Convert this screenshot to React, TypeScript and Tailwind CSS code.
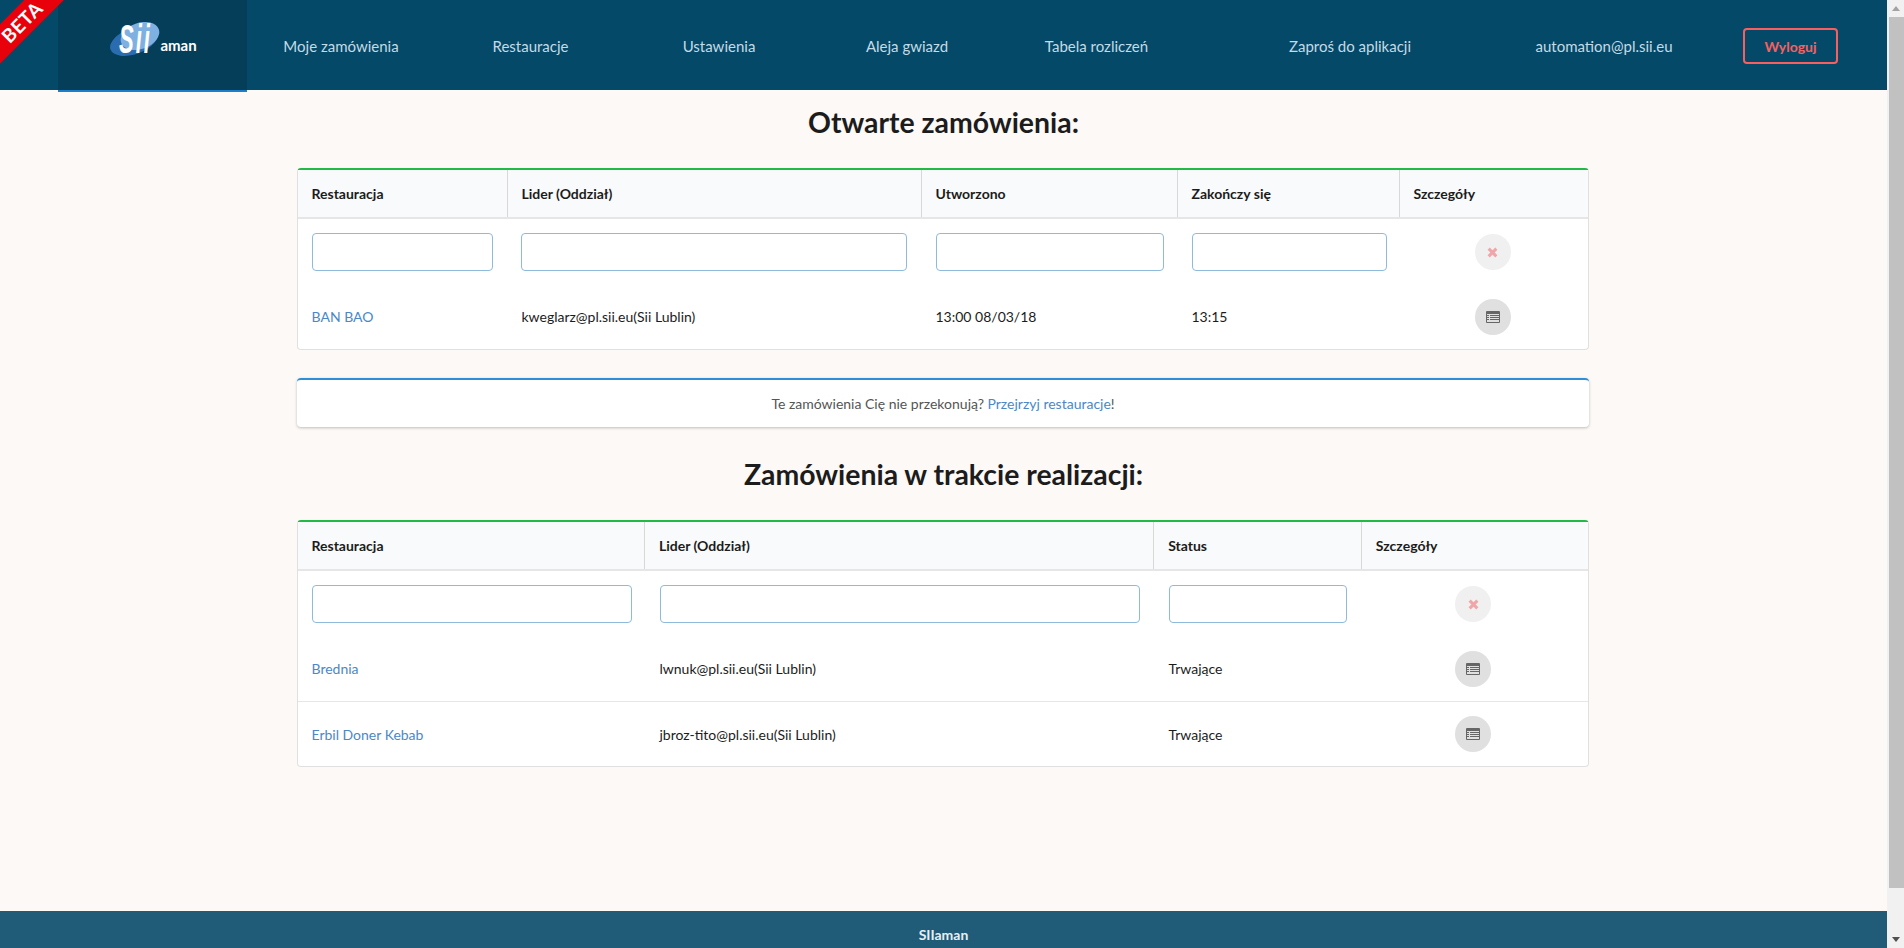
const navItems = [
  { label: "Moje zamówienia", w: "w-[188px]" },
  { label: "Restauracje", w: "w-[191px]" },
  { label: "Ustawienia", w: "w-[186px]" },
  { label: "Aleja gwiazd", w: "w-[190px]" },
  { label: "Tabela rozliczeń", w: "w-[189px]" },
  { label: "Zaproś do aplikacji", w: "w-[318px]" },
  { label: "automation@pl.sii.eu", w: "w-[190px]" },
];

function ClearButton() {
  return (
    <button className="w-9 h-9 rounded-full bg-[#f0f0f0] flex items-center justify-center mx-auto">
      <svg width="11" height="11" viewBox="0 0 10 10">
        <path d="M1.5 1.5 8.5 8.5M8.5 1.5 1.5 8.5" stroke="#f0a6a8" strokeWidth="2.8" />
      </svg>
    </button>
  );
}

function DetailsButton() {
  return (
    <button className="w-9 h-9 rounded-full bg-[#e0e0e0] flex items-center justify-center mx-auto">
      <svg width="14" height="12" viewBox="0 0 14 12">
        <rect x="0" y="0" width="14" height="12" rx="1" fill="#666" />
        <rect x="1" y="3" width="12" height="8" fill="#e0e0e0" />
        <path d="M1 4.5h2M4 4.5h9M1 6.5h2M4 6.5h9M1 8.5h2M4 8.5h9" stroke="#666" strokeWidth="1" />
      </svg>
    </button>
  );
}

function Filter({ cls }: { cls: string }) {
  return <input className={`block h-[38px] bg-white border border-[#8ebbdc] rounded-[4px] ${cls}`} />;
}

function HeadCell({ label, w, last }: { label: string; w: string; last?: boolean }) {
  return (
    <div className={`${w} px-[14px] flex items-center font-bold text-[14px] text-[#1c1c1c] ${last ? "" : "border-r border-[#d8d8d8]"}`}>
      {label}
    </div>
  );
}

function Card({ children }: { children: React.ReactNode }) {
  return (
    <div className="w-[1292px] mr-[2px] bg-white border border-[#e0e0e0] border-t-2 border-t-[#21ba45] rounded-[4px] text-[14px] text-[#1c1c1c]">
      {children}
    </div>
  );
}

function OpenOrders() {
  return (
    <Card>
      <div className="flex h-[49px] bg-[#f9fafb] border-b-2 border-[#e6e6e6]">
        <HeadCell label="Restauracja" w="w-[210px]" />
        <HeadCell label="Lider (Oddział)" w="w-[414px]" />
        <HeadCell label="Utworzono" w="w-[256px]" />
        <HeadCell label="Zakończy się" w="w-[222px]" />
        <HeadCell label="Szczegóły" w="w-[188px]" last />
      </div>
      <div className="flex items-center h-[65px] pt-[1px]">
        <div className="w-[210px] pl-[14px]"><Filter cls="w-[181px]" /></div>
        <div className="w-[414px] pl-[13px]"><Filter cls="w-[386px]" /></div>
        <div className="w-[256px] pl-[14px]"><Filter cls="w-[228px]" /></div>
        <div className="w-[222px] pl-[14px]"><Filter cls="w-[195px]" /></div>
        <div className="flex-1 pr-[2px]"><ClearButton /></div>
      </div>
      <div className="flex items-center h-[65px]">
        <a className="w-[210px] pl-[14px] text-[#4a88c7]">BAN BAO</a>
        <div className="w-[414px] pl-[14px]">kweglarz@pl.sii.eu(Sii Lublin)</div>
        <div className="w-[256px] pl-[14px]">13:00 08/03/18</div>
        <div className="w-[222px] pl-[14px]">13:15</div>
        <div className="flex-1 pr-[2px]"><DetailsButton /></div>
      </div>
    </Card>
  );
}

function OngoingRow({ name, leader, border }: { name: string; leader: string; border?: boolean }) {
  return (
    <div className={`flex items-center h-[65px] ${border ? "border-t border-[#e6e6e6]" : ""}`}>
      <a className="w-[348px] pl-[14px] text-[#4a88c7]">{name}</a>
      <div className="w-[510px] pl-[14px]">{leader}</div>
      <div className="w-[208px] pl-[13px]">Trwające</div>
      <div className="flex-1 pr-[5px]"><DetailsButton /></div>
    </div>
  );
}

function OngoingOrders() {
  return (
    <Card>
      <div className="flex h-[49px] bg-[#f9fafb] border-b-2 border-[#e6e6e6]">
        <HeadCell label="Restauracja" w="w-[348px]" />
        <HeadCell label="Lider (Oddział)" w="w-[510px]" />
        <HeadCell label="Status" w="w-[208px]" />
        <HeadCell label="Szczegóły" w="w-[226px]" last />
      </div>
      <div className="flex items-center h-[65px] pt-[1px]">
        <div className="w-[348px] pl-[14px]"><Filter cls="w-[320px]" /></div>
        <div className="w-[510px] pl-[14px]"><Filter cls="w-[480px]" /></div>
        <div className="w-[208px] pl-[13px]"><Filter cls="w-[178px]" /></div>
        <div className="flex-1 pr-[5px]"><ClearButton /></div>
      </div>
      <OngoingRow name="Brednia" leader="lwnuk@pl.sii.eu(Sii Lublin)" />
      <OngoingRow name="Erbil Doner Kebab" leader="jbroz-tito@pl.sii.eu(Sii Lublin)" border />
    </Card>
  );
}

export default function App() {
  return (
    <div className="flex h-[948px] w-full overflow-hidden font-['Lato','Liberation_Sans',sans-serif]">
      <div className="relative flex-1 flex flex-col bg-[#fdf9f6]">
        <header className="relative h-[90px] bg-[#044968] flex pl-[58px] text-[15px] text-[#c3dbe6]">
          <div className="h-[92px] w-[189px] bg-[#043e59] border-b-2 border-[#1d7fcb] flex items-start justify-center pt-[22px] pl-[2px] z-10">
            <svg width="50" height="34" viewBox="0 0 50 34">
              <ellipse cx="24" cy="19" rx="25" ry="13" transform="rotate(-20 24 19)" fill="#2b6cb0" />
              <ellipse cx="30" cy="14" rx="20" ry="13" transform="rotate(-20 30 14)" fill="#7fb0e2" />
              <text x="9" y="17" fontSize="22" fontStyle="italic" fontWeight="bold" fontFamily="Liberation Sans" letterSpacing="2" fill="#fff" transform="scale(1 1.85)">Sii</text>
            </svg>
            <span className="font-bold text-[15px] text-white mt-[12px]">aman</span>
          </div>
          {navItems.map((item) => (
            <a key={item.label} className={`${item.w} flex items-center justify-center pt-[2px]`}>
              {item.label}
            </a>
          ))}
          <div className="flex items-center ml-[44px] pt-[2px]">
            <button className="w-[95px] h-[36px] border-2 border-[#f95f5f] rounded-[4px] font-bold text-[14px] text-[#f95f5f]">
              Wyloguj
            </button>
          </div>
        </header>

        <div className="absolute left-[-33px] top-[8px] w-[110px] h-[28px] bg-[#e8000b] -rotate-45 flex items-center justify-center text-white font-bold text-[19px] tracking-[0.5px] z-20">
          BETA
        </div>

        <main className="flex-1 flex flex-col items-center">
          <h1 className="mt-[12px] h-[40px] text-[28.4px] leading-[40px] font-bold text-[#1c1c1c]">Otwarte zamówienia:</h1>
          <div className="mt-[26px]"><OpenOrders /></div>
          <div className="mt-[28px] mr-[1px] w-[1292px] h-[49px] bg-white border-t-2 border-t-[#2e8fd8] rounded-[4px] shadow-[0_1px_3px_rgba(0,0,0,0.25)] flex items-center justify-center text-[14px] text-[#555]">
            <span>Te zamówienia Cię nie przekonują? <a className="text-[#4a88c7]">Przejrzyj restauracje</a>!</span>
          </div>
          <h2 className="mt-[27px] h-[40px] text-[28.4px] leading-[40px] font-bold text-[#1c1c1c]">Zamówienia w trakcie realizacji:</h2>
          <div className="mt-[26px]"><OngoingOrders /></div>
        </main>

        <footer className="h-[37px] bg-[#205b77] flex items-start justify-center pt-[15px] text-[14px] leading-[18px] font-bold text-[#e6f0f5]">
          SIIaman
        </footer>
      </div>

      <div className="w-[17px] flex flex-col items-center bg-[#f1f1f1]">
        <div className="h-[17px] flex items-center justify-center text-[#a3a3a3]">
          <svg width="8" height="5" viewBox="0 0 8 5"><path d="M4 0 8 5H0z" fill="currentColor" /></svg>
        </div>
        <div className="w-[15px] h-[871px] bg-[#c1c1c1] self-end" />
        <div className="flex-1" />
        <div className="h-[17px] flex items-center justify-center text-[#505050]">
          <svg width="8" height="5" viewBox="0 0 8 5"><path d="M0 0h8L4 5z" fill="currentColor" /></svg>
        </div>
      </div>
    </div>
  );
}
